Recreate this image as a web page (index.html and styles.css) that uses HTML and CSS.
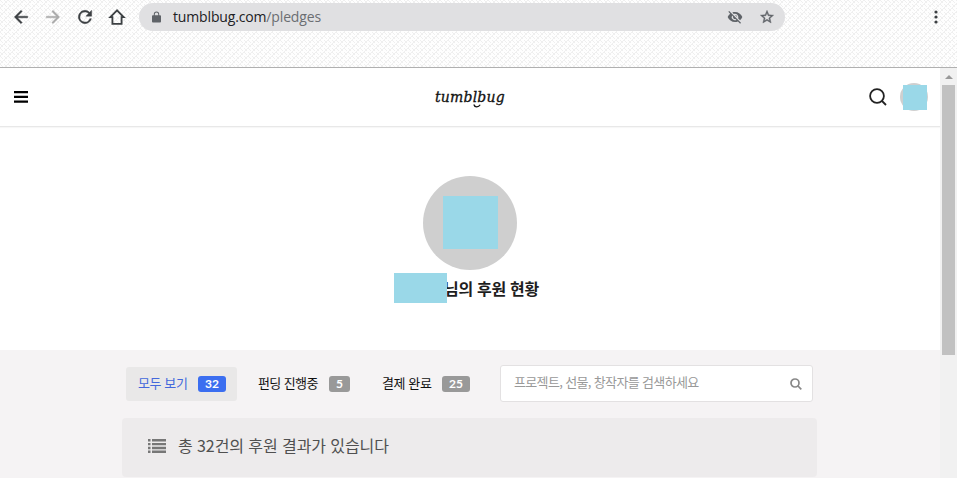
FILE: index.html
```html
<!DOCTYPE html>
<html lang="ko">
<head>
<meta charset="utf-8">
<title>텀블벅</title>
<link rel="stylesheet" href="styles.css">
</head>
<body>
<div class="browser">
  <svg class="weave" width="957" height="67" aria-hidden="true">
    <defs><pattern id="weave" width="8" height="8" patternUnits="userSpaceOnUse">
      <path d="M0 0l3 3M4 4l3 3M4 0l3 3M0 4l3 3M8 0l-4 4M4 4l-4 4" fill="none" stroke="#efefef" stroke-width="1"/>
    </pattern></defs>
    <rect width="957" height="67" fill="url(#weave)"/>
  </svg>
  <div class="toolbar">
    <svg class="nav" viewBox="0 0 24 24"><path d="M20 11H7.83l5.59-5.59L12 4l-8 8 8 8 1.41-1.41L7.83 13H20z"/></svg>
    <svg class="nav dim" viewBox="0 0 24 24"><path d="M12 4l-1.41 1.41L16.17 11H4v2h12.17l-5.58 5.59L12 20l8-8z"/></svg>
    <svg class="nav" viewBox="0 0 24 24"><path d="M17.65 6.35A8 8 0 1 0 19.73 14h-2.08A6 6 0 1 1 12 6c1.66 0 3.14.69 4.22 1.78L13 11h7V4z"/></svg>
    <svg class="nav" viewBox="0 0 24 24"><path d="M12 4L4 12.200H6.500v8h11v-8H20z" fill="none" stroke="#3c4043" stroke-width="2.200"/></svg>
    <div class="omnibox">
      <svg class="lock" viewBox="0 0 10 12"><path d="M9 4H8V3a3 3 0 0 0-6 0v1H1a1 1 0 0 0-1 1v6a1 1 0 0 0 1 1h8a1 1 0 0 0 1-1V5a1 1 0 0 0-1-1zM3.100 4V3a1.900 1.900 0 0 1 3.800 0v1z"/></svg>
      <span class="url">tumblbug.com<span class="path">/pledges</span></span>
      <svg class="omni-icon" viewBox="0 0 24 24"><path d="M12 7c2.760 0 5 2.240 5 5 0 .65-.13 1.260-.36 1.830l2.920 2.920A11.800 11.800 0 0 0 22.990 12c-1.730-4.390-6-7.500-11-7.500-1.400 0-2.740.25-3.980.7l2.160 2.160C10.740 7.130 11.350 7 12 7zM2 4.270l2.740 2.740A11.800 11.800 0 0 0 1 12c1.730 4.390 6 7.500 11 7.500 1.550 0 3.030-.3 4.380-.84L19.730 22 21 20.730 3.270 3zM7.530 9.800l1.550 1.550a3 3 0 0 0 3.570 3.570l1.550 1.550A5 5 0 0 1 7.530 9.800zm4.310-.78 3.150 3.150.02-.16a3 3 0 0 0-3-3z"/></svg>
      <svg class="omni-icon" viewBox="0 0 24 24"><path stroke="#5f6368" stroke-width=".6" d="M22 9.240l-7.190-.62L12 2 9.190 8.630 2 9.240l5.460 4.730L5.820 21 12 17.270 18.180 21l-1.630-7.030zM12 15.400l-3.760 2.270 1-4.280-3.320-2.880 4.380-.38L12 6.100l1.710 4.040 4.380.38-3.320 2.880 1 4.280z"/></svg>
    </div>
    <svg class="dots" viewBox="0 0 4 14"><circle cx="2" cy="2" r="1.600"/><circle cx="2" cy="7" r="1.600"/><circle cx="2" cy="12" r="1.600"/></svg>
  </div>
</div>
<div class="viewport">
  <div class="page">
    <header class="header">
      <svg class="menu" viewBox="0 0 14 12"><path d="M0 0h14v2.200H0zM0 4.800h14V7H0zM0 9.600h14v2.200H0z"/></svg>
      <div class="logo">tumblbug<svg class="smile" viewBox="0 0 8 4"><path d="M.8.500C1.500 3.500 5.500 3.500 7.200.800"/></svg></div>
      <div class="actions">
        <svg class="find" viewBox="0 0 18 18"><circle cx="8" cy="8" r="6.900"/><path d="M13 13l4 4"/></svg>
        <div class="avatar"><div class="avatar-mask"></div></div>
      </div>
    </header>
    <section class="hero">
      <div class="portrait"><div class="portrait-mask"></div></div>
      <h1 class="title"><span class="name-mask"></span><span class="title-text">님의 후원 현황</span></h1>
    </section>
    <main class="content">
      <div class="filters">
        <div class="tab active"><span class="label">모두 보기</span><span class="badge">32</span></div>
        <div class="tab wide"><span class="label">펀딩 진행중</span><span class="badge">5</span></div>
        <div class="tab"><span class="label">결제 완료</span><span class="badge">25</span></div>
        <div class="search"><span class="placeholder">프로젝트, 선물, 창작자를 검색하세요</span>
          <svg class="search-icon" viewBox="0 0 12 12"><circle cx="5" cy="5" r="4"/><path d="M8 8l3.300 3.300"/></svg></div>
      </div>
      <div class="summary">
        <svg class="list" viewBox="0 0 18 14"><path d="M0 0h2.500v2.400H0zM4 0h14v2.400H4zM0 3.900h2.500v2.400H0zM4 3.900h14v2.400H4zM0 7.800h2.500v2.400H0zM4 7.800h14v2.400H4zM0 11.600h2.500V14H0zM4 11.600h14V14H4z"/></svg>
        <span class="summary-text">총 32건의 후원 결과가 있습니다</span>
      </div>
    </main>
  </div>
  <div class="scrollbar"><div class="arrow"></div><div class="thumb"></div></div>
</div>
</body>
</html>
```
FILE: styles.css
```css
* { box-sizing: border-box; }
body { margin: 0; width: 957px; height: 478px; overflow: hidden; background: #fff; font-family: "Noto Sans CJK KR", sans-serif; }
svg { display: block; flex: none; }
.browser { position: relative; height: 68px; border-bottom: 1px solid #b0b0b0; background: #fefefe; }
.weave { position: absolute; left: 0; top: 0; }
.toolbar { position: relative; display: flex; align-items: center; height: 34px; padding-left: 11px; }
.nav { width: 20px; height: 20px; margin-right: 12px; fill: #3c4043; stroke: #3c4043; stroke-width: .5; }
.dim { fill: #aaa; stroke: #aaa; }
.omnibox { display: flex; align-items: center; width: 646px; height: 28px; padding: 0 10px 0 13px; border-radius: 14px; background: #e0e0e2; }
.lock { width: 9px; height: 12px; fill: #5f6368; }
.url { flex: 1; margin-left: 12px; font: 14px/20px "Open Sans", sans-serif; letter-spacing: -.15px; color: #202124; white-space: nowrap; }
.path { color: #6b6e72; }
.omni-icon { width: 16px; height: 16px; margin-left: 16px; fill: #5f6368; }
.dots { width: 4px; height: 14px; margin-left: 149px; fill: #3c4043; }
.viewport { display: flex; height: 410px; }
.page { width: 940px; background: #fff; }
.header { display: grid; grid-template-columns: 1fr auto 1fr; align-items: center; height: 59px; padding: 0 12px 0 14px; border-bottom: 1px solid #e8e8e8; box-shadow: 0 1px 1px #f7f7f7; }
.menu { width: 14px; height: 12px; margin-top: -1px; }
.logo { position: relative; width: 72px; font: italic 14px/20px "DejaVu Serif", serif; color: #111; letter-spacing: .2px; -webkit-text-stroke: .3px #111; }
.smile { position: absolute; left: 38px; top: 17px; width: 8px; height: 4px; fill: none; stroke: #111; stroke-width: 1.200; }
.actions { display: flex; justify-content: flex-end; align-items: center; gap: 13px; }
.find { width: 18px; height: 18px; fill: none; stroke: #222; stroke-width: 1.800; }
.avatar { width: 28px; height: 28px; padding: 2px 0 0 3px; border-radius: 50%; background: #cfcfcf; }
.avatar-mask { width: 24px; height: 25px; background: #9ad8e8; }
.hero { display: flex; flex-direction: column; align-items: center; height: 223px; padding-top: 49px; }
.portrait { width: 94px; height: 94px; padding: 20px 0 0 20px; border-radius: 50%; background: #cfcfcf; }
.portrait-mask { width: 55px; height: 53px; background: #9ad8e8; }
.title { display: flex; align-items: center; width: 152px; height: 30px; margin: 3px 0 0; font-size: 16px; line-height: 30px; font-weight: 700; color: #1e1e1e; white-space: nowrap; }
.name-mask { position: relative; flex: none; width: 53px; height: 30px; background: #9ad8e8; }
.title-text { margin-left: -3px; letter-spacing: -.3px; }
.content { height: 128px; padding: 15px 0 0 122px; background: #f5f3f4; }
.filters { display: flex; align-items: center; height: 37px; padding-left: 4px; }
.tab { display: flex; align-items: center; width: 111px; height: 34px; padding-left: 12px; border-radius: 3px; font-size: 13px; color: #111; white-space: nowrap; }
.wide { width: 116px; margin-left: 9px; }
.wide + .tab { width: 110px; margin-left: 9px; padding-left: 11px; }
.label { width: 60px; flex: none; padding-bottom: 2px; letter-spacing: -.4px; }
.wide .label { width: 71px; letter-spacing: -.6px; }
.active { background: #e9e8e8; color: #4468dc; }
.badge { height: 16px; padding: 0 7px; border-radius: 3px; background: #999; color: #fff; font: 700 12px/15px Lato, sans-serif; }
.active .badge { background: #3b6ef0; }
.search { display: flex; align-items: center; justify-content: space-between; width: 313px; height: 37px; margin-left: 19px; padding: 0 10px 0 13px; border: 1px solid #e3e1e2; border-radius: 3px; background: #fff; color: #999; font-size: 13px; white-space: nowrap; }
.placeholder { padding-bottom: 4px; letter-spacing: -.65px; }
.search-icon { width: 12px; height: 12px; fill: none; stroke: #888; stroke-width: 1.700; }
.summary { display: flex; align-items: center; width: 695px; height: 59px; margin-top: 16px; padding: 0 0 3px 26px; border-radius: 4px; background: #edebec; color: #505050; font-size: 16px; white-space: nowrap; }
.list { width: 18px; height: 14px; fill: #777; }
.summary-text { margin-left: 12px; padding-bottom: 2px; letter-spacing: -.08px; }
.scrollbar { display: flex; flex-direction: column; align-items: center; width: 17px; padding-top: 7px; background: #f1f1f1; }
.arrow { width: 0; border: 4px solid transparent; border-top: 0; border-bottom-color: #999; }
.thumb { width: 13px; height: 270px; margin-top: 6px; background: #c1c1c1; }
```
